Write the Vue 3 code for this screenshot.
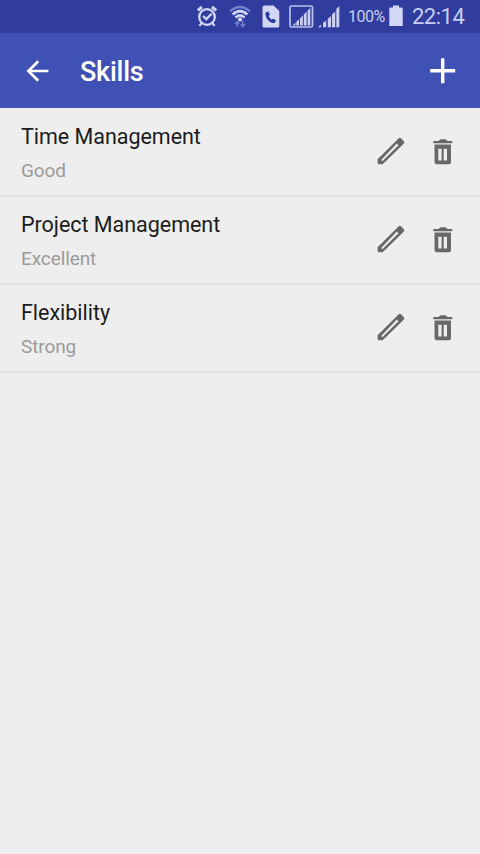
<script setup>
import { ref } from 'vue'

const skills = ref([
  { name: 'Time Management', level: 'Good' },
  { name: 'Project Management', level: 'Excellent' },
  { name: 'Flexibility', level: 'Strong' },
])
</script>

<template>
  <div class="screen">
    <div class="status">
      <svg class="alarm" width="22" height="24" viewBox="0 0 22 24" fill="none" stroke="#d3d7f5">
        <circle cx="11" cy="12" r="7.8" stroke-width="2.300" />
        <path d="M1.800 5.400 6 2M20.200 5.400 16 2" stroke-width="3" />
        <path d="M5.500 18 3.500 21M16.500 18 18.500 21" stroke-width="2.200" />
        <path d="M7 11 10.300 14.100 15.600 8.700" stroke-width="2.200" />
      </svg>
      <svg class="wifi" width="22" height="24" viewBox="0 0 22 24" fill="none">
        <path d="M1 6.500Q11 -2.500 21 6.500" stroke="#7883cc" stroke-width="2.200" />
        <path d="M3.700 9.500Q11 2.800 18.300 9.500" stroke="#d3d7f5" stroke-width="2.500" />
        <path d="M6.500 12.500Q11 8.300 15.500 12.500" stroke="#d3d7f5" stroke-width="2.500" />
        <circle cx="11" cy="14.500" r="2" fill="#e3e6fb" />
        <path d="M8.300 21.800V16.500M5.900 19 8.300 16.500 10 19M13.700 15.800V21.300M11.800 19.200 13.700 21.600 16 19.200" stroke="#6f7aca" stroke-width="1.700" />
      </svg>
      <svg class="sim" width="18" height="24" viewBox="0 0 18 24">
        <path d="M2.500 .5H11.500L17.300 6V21Q17.300 22.500 15.800 22.500H2Q.5 22.500 .5 21V2.500Q.5 .5 2.500 .5Z" fill="#d3d7f5" />
        <path d="M4 7.300 6.200 6.400 8 9.500 6.700 11Q7.700 13.500 9.800 14.700L11.300 13.600 14 15.600 12.800 17.700Q11.600 18.500 9.500 17.700C6.200 16.200 4 13.200 3.400 9.500Q3.200 8.100 4 7.300Z" fill="#303c9b" />
      </svg>
      <svg class="boxed" width="25" height="24" viewBox="0 0 25 24">
        <rect x="1" y="1" width="22.500" height="21" rx="1.500" fill="none" stroke="#b9c0ea" stroke-width="1.700" />
        <path d="M3.500 20.500 6.500 17.500V20.500ZM7.300 17 10 14.300V20.500H7.300ZM11 13.300 13.800 10.500V20.500H11ZM14.800 9.500 17.600 6.700V20.500H14.800ZM18.600 5.700 21.300 3V20.500H18.600Z" fill="#ccd1f2" />
      </svg>
      <svg class="signal" width="22" height="24" viewBox="0 0 22 24">
        <path d="M0 22.300 3 19.500V22.300ZM5 18 8.200 15.500V22.300H5ZM9.800 14 13 11V22.300H9.800ZM14 9.500 17.200 6.500V22.300H14ZM18.300 4 21.300 1V22.300H18.300Z" fill="#ccd1f2" />
      </svg>
      <span class="percent">100%</span>
      <svg class="battery" width="14" height="22" viewBox="0 0 14 22">
        <path d="M4 .500H10V2.500H12.500Q13.700 2.500 13.700 3.700V21H.3V3.700Q.3 2.500 1.500 2.500H4Z" fill="#d3d7f5" />
      </svg>
      <span class="clock">22:14</span>
    </div>

    <header class="bar">
      <svg class="back" width="24" height="24" viewBox="0 0 24 24" fill="none" stroke="#fff" stroke-width="2.700">
        <path d="M23.400 12H3.400M13.200 2.200 3.400 12 13.200 21.800" />
      </svg>
      <h1>Skills</h1>
      <svg class="plus" width="26" height="26" viewBox="0 0 26 26" fill="none" stroke="#fff" stroke-width="3.400">
        <path d="M12.700 .3V25.300M.2 12.800H25.200" />
      </svg>
    </header>

    <ul class="list">
      <li v-for="skill in skills" :key="skill.name" class="row">
        <div class="text">
          <div class="name">{{ skill.name }}</div>
          <div class="level">{{ skill.level }}</div>
        </div>
        <svg class="pencil" width="28" height="28" viewBox="0 0 28 28">
          <path fill="#686868" fill-rule="evenodd" d="M.6 22.300 21.800 1.300Q22.900 .3 24 1.300L26.900 4.200Q27.900 5.300 26.900 6.400L5.700 27.200H1.500Q.6 27.200 .6 26.300ZM4.200 23 5.400 24.200 21.500 8.300 19.800 6.600Z" />
        </svg>
        <svg class="trash" width="20" height="26" viewBox="0 0 20 26">
          <path d="M.3 2H5.500Q6.500 .3 8 .3H12Q13.500 .3 14.500 2H19.300V4.300H.3Z" fill="#686868" />
          <path fill-rule="evenodd" d="M1.500 5.500H18V23Q18 25.300 15.800 25.300H3.700Q1.500 25.300 1.500 23ZM5.300 9.800V21.500H8.600V9.800ZM10.700 9.800V21.500H14V9.800Z" fill="#686868" />
        </svg>
      </li>
    </ul>
  </div>
</template>

<style>
body {
  margin: 0;
  background: #eeeeee;
}
</style>

<style scoped>
.screen {
  width: 480px;
  height: 854px;
  overflow: hidden;
  background: #eeeeee;
  font-family: Roboto, sans-serif;
}
.screen svg {
  display: block;
  flex: none;
}
.status {
  box-sizing: border-box;
  display: flex;
  align-items: center;
  height: 33px;
  padding-left: 196px;
  background: #303d9f;
  color: #c9cef0;
}
.wifi {
  margin-left: 11px;
}
.sim {
  margin-left: 11px;
}
.boxed {
  margin-left: 9px;
}
.signal {
  margin-left: 4px;
}
.percent {
  width: 37px;
  margin-left: 8px;
  font-size: 16px;
  letter-spacing: -0.5px;
  white-space: nowrap;
}
.battery {
  margin-left: 4px;
  margin-bottom: 2px;
}
.clock {
  margin-left: 9px;
  font-size: 22px;
  letter-spacing: -0.5px;
  white-space: nowrap;
}
.bar {
  box-sizing: border-box;
  display: flex;
  align-items: center;
  height: 75px;
  padding: 0 24px 0 25px;
  background: #3f51b5;
  color: #fff;
}
.bar h1 {
  flex: 1;
  margin: 3px 0 0 31px;
  font-size: 27px;
  font-weight: 500;
  line-height: 32px;
  letter-spacing: -0.25px;
}
.list {
  margin: 0;
  padding: 0;
  border-top: 1px solid #e5e9f4;
  list-style: none;
}
.row {
  box-sizing: border-box;
  display: flex;
  align-items: center;
  height: 88px;
  padding: 0 27px 0 21px;
  border-bottom: 2px solid #e1e1e1;
}
.text {
  flex: 1;
  padding-top: 2px;
}
.name {
  font-size: 21.5px;
  line-height: 30px;
  letter-spacing: -0.03px;
  color: #1c1c1c;
}
.level {
  margin-top: 6px;
  font-size: 19px;
  line-height: 26px;
  letter-spacing: -0.1px;
  color: #9b9b9b;
}
.pencil {
  margin-bottom: 2px;
}
.trash {
  margin-left: 28px;
}
</style>
